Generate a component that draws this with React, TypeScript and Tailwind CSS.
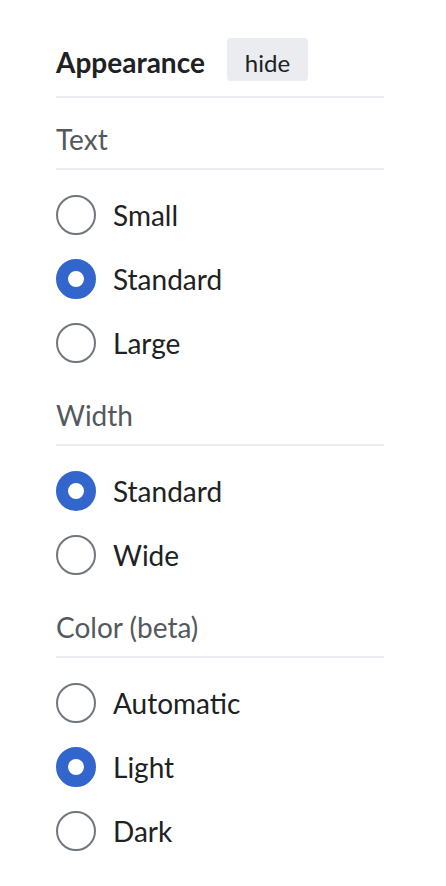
import React, { useState } from "react";

type Group = { title: string; options: string[]; initial: string };

const groups: Group[] = [
  { title: "Text", options: ["Small", "Standard", "Large"], initial: "Standard" },
  { title: "Width", options: ["Standard", "Wide"], initial: "Standard" },
  { title: "Color (beta)", options: ["Automatic", "Light", "Dark"], initial: "Light" },
];

function RadioGroup({ group, first }: { group: Group; first: boolean }) {
  const [value, setValue] = useState(group.initial);
  return (
    <div>
      <div
        className={
          first
            ? "pt-[27px] pb-[15px] border-b-2 border-[#eaecf0]"
            : "pt-[26px] pb-[15px] border-b-2 border-[#eaecf0]"
        }
      >
        <div className="text-[28px] leading-[28px] text-[#54595d]">{group.title}</div>
      </div>
      <div className="pt-[13px]">
        {group.options.map((opt) => {
          const checked = value === opt;
          return (
            <label
              key={opt}
              className="flex h-[64px] items-center gap-[17px] cursor-pointer"
              onClick={() => setValue(opt)}
            >
              <span
                className={
                  checked
                    ? "box-border block h-[40px] w-[40px] rounded-full border-[12px] border-[#3366cc] bg-white"
                    : "box-border block h-[40px] w-[40px] rounded-full border-2 border-[#72777d] bg-white"
                }
              />
              <span className="text-[28px] leading-[28px] text-[#202122]">{opt}</span>
            </label>
          );
        })}
      </div>
    </div>
  );
}

export default function App() {
  return (
    <div
      className="min-h-[886px] w-[446px] bg-white"
      style={{ fontFamily: "Lato, 'Noto Sans', sans-serif" }}
    >
      <div className="ml-[56px] w-[328px]">
        <div className="pt-[38px] pb-[15px] border-b-2 border-[#eaecf0]">
          <div className="flex h-[43px] items-start gap-[22px]">
            <div className="mt-[10px] text-[28px] leading-[28px] font-bold text-[#202122]">
              Appearance
            </div>
            <button className="h-[43px] rounded-[4px] bg-[#eaecf0] px-[18px] pt-[13px] pb-[6px] text-[24px] leading-[24px] text-[#202122]">
              hide
            </button>
          </div>
        </div>
        {groups.map((g, i) => (
          <RadioGroup key={g.title} group={g} first={i === 0} />
        ))}
      </div>
    </div>
  );
}
